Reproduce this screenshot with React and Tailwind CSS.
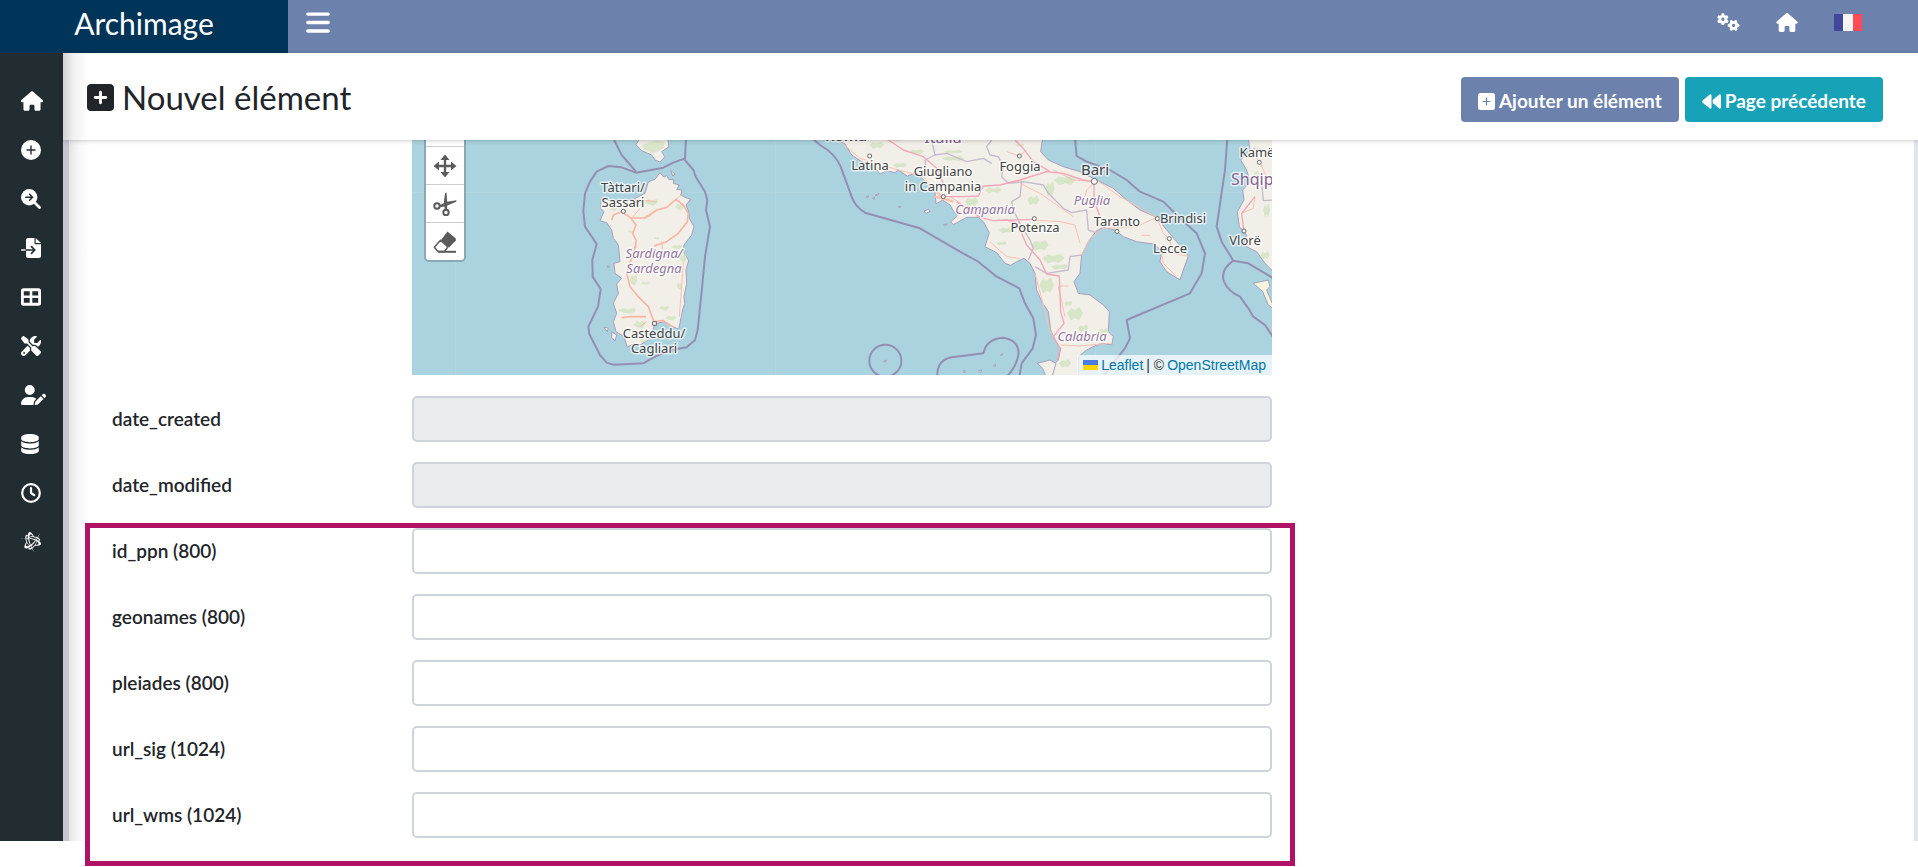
import React from 'react';
import {
  FaBackward,
  FaBars,
  FaBattleNet,
  FaDatabase,
  FaGears,
  FaHouse,
  FaScrewdriverWrench,
  FaSquarePlus,
  FaUserPen,
} from 'react-icons/fa6';

const CirclePlusIcon = ({ className }) => (
  <svg viewBox="0 0 20 20" className={className} aria-hidden="true">
    <circle cx="10" cy="10" r="10" fill="currentColor" />
    <path d="M10 6V14M6 10H14" stroke="#222d32" strokeWidth="1.400" strokeLinecap="round" />
  </svg>
);

const SearchArrowIcon = ({ className }) => (
  <svg viewBox="0 0 20 20" className={className} aria-hidden="true">
    <path d="M12 12L18.500 18.500" stroke="currentColor" strokeWidth="2.800" strokeLinecap="round" />
    <circle cx="8.200" cy="8.200" r="8.200" fill="currentColor" />
    <path d="M4.800 8.200H11.400M8.600 5.200L11.600 8.200L8.600 11.200" fill="none" stroke="#222d32" strokeWidth="1.500" strokeLinecap="round" strokeLinejoin="round" />
  </svg>
);

const FileImportIcon = ({ className }) => (
  <svg viewBox="0 0 20 20" className={className} aria-hidden="true">
    <path d="M7 0H13.500V5.200Q13.500 6.200 14.500 6.200H20V18Q20 20 18 20H7Q5 20 5 18V2Q5 0 7 0Z" fill="currentColor" />
    <path d="M14.700 0L20 5H14.700Z" fill="currentColor" />
    <path d="M0.800 12H5" stroke="currentColor" strokeWidth="1.600" strokeLinecap="round" />
    <path d="M5 12H13.500M10.500 8.700L13.800 12L10.500 15.300" fill="none" stroke="#222d32" strokeWidth="1.700" strokeLinecap="round" strokeLinejoin="round" />
  </svg>
);

const TableIcon = ({ className }) => (
  <svg viewBox="0 0 20 20" className={className} aria-hidden="true">
    <path
      fill="currentColor"
      fillRule="evenodd"
      d="M2.500 1.300H17.500Q20 1.300 20 3.800V16.200Q20 18.700 17.500 18.700H2.500Q0 18.700 0 16.200V3.800Q0 1.300 2.500 1.300ZM2.800 4.200V8.600H8.700V4.200ZM11.300 4.200V8.600H17.200V4.200ZM2.800 11.100V15.800H8.700V11.100ZM11.300 11.100V15.800H17.200V11.100Z"
    />
  </svg>
);

const ClockIcon = ({ className }) => (
  <svg viewBox="0 0 20 20" className={className} fill="none" stroke="currentColor" strokeWidth="2.200" aria-hidden="true">
    <circle cx="10" cy="10" r="8.800" />
    <path d="M10 5V10L13.200 12.200" strokeLinecap="round" strokeLinejoin="round" />
  </svg>
);

const AddIcon = ({ className }) => (
  <svg viewBox="0 0 17 17" className={className} aria-hidden="true">
    <rect width="17" height="17" rx="2.500" fill="currentColor" />
    <path d="M8.500 5V12M5 8.500H12" stroke="#6c82ad" strokeWidth="1.200" strokeLinecap="round" />
  </svg>
);

const MENU = [
  { label: 'Accueil', icon: FaHouse, size: 'w-[22px] h-5' },
  { label: 'Ajouter', icon: CirclePlusIcon, size: 'w-5 h-5' },
  { label: 'Rechercher', icon: SearchArrowIcon, size: 'w-5 h-5' },
  { label: 'Importer', icon: FileImportIcon, size: 'w-5 h-5' },
  { label: 'Tables', icon: TableIcon, size: 'w-5 h-5' },
  { label: 'Outils', icon: FaScrewdriverWrench, size: 'w-5 h-5' },
  { label: 'Utilisateurs', icon: FaUserPen, size: 'w-[25px] h-5' },
  { label: 'Base de données', icon: FaDatabase, size: 'w-[18px] h-5' },
  { label: 'Historique', icon: ClockIcon, size: 'w-5 h-5' },
  { label: 'Réseau', icon: FaBattleNet, size: 'w-5 h-5' },
];

const DATE_FIELDS = [
  { id: 'date_created', label: 'date_created' },
  { id: 'date_modified', label: 'date_modified' },
];

const LINK_FIELDS = [
  { id: 'id_ppn', label: 'id_ppn (800)', max: 800 },
  { id: 'geonames', label: 'geonames (800)', max: 800 },
  { id: 'pleiades', label: 'pleiades (800)', max: 800 },
  { id: 'url_sig', label: 'url_sig (1024)', max: 1024 },
  { id: 'url_wms', label: 'url_wms (1024)', max: 1024 },
];

const CITIES = [
  { name: 'Tàttari/', x: 211, y: 52 },
  { name: 'Sassari', x: 211, y: 67 },
  { name: 'Casteddu/', x: 242, y: 198 },
  { name: 'Cagliari', x: 242, y: 213 },
  { name: 'Latina', x: 458, y: 30 },
  { name: 'Giugliano', x: 531, y: 36 },
  { name: 'in Campania', x: 531, y: 51 },
  { name: 'Foggia', x: 608, y: 31 },
  { name: 'Potenza', x: 623, y: 92 },
  { name: 'Taranto', x: 705, y: 86 },
  { name: 'Brindisi', x: 771, y: 83 },
  { name: 'Lecce', x: 758, y: 113 },
  { name: 'Vlorë', x: 833, y: 105 },
  { name: 'Kamë', x: 845, y: 17 },
];

const REGIONS = [
  { name: 'Sardigna/', x: 242, y: 118 },
  { name: 'Sardegna', x: 242, y: 133 },
  { name: 'Campania', x: 573, y: 74 },
  { name: 'Puglia', x: 680, y: 65 },
  { name: 'Calabria', x: 670, y: 201 },
];

// Woodland patches, [cx, cy, rx, ry]
const SARDINIA_GREEN = [
  [752, 218, 22, 10], [700, 452, 12, 18], [680, 543, 28, 9], [718, 585, 18, 13],
  [792, 535, 15, 8], [812, 565, 16, 8], [735, 460, 12, 5], [848, 385, 12, 16],
  [830, 352, 16, 8], [745, 258, 10, 5], [640, 238, 12, 6], [690, 305, 8, 4],
  [838, 232, 12, 12], [770, 325, 8, 4], [838, 470, 8, 12], [730, 632, 12, 6],
];

const ITALY_GREEN = [
  [170, 45, 22, 10], [290, 65, 22, 7], [400, 85, 35, 7], [240, 105, 22, 7],
  [455, 215, 20, 14], [520, 180, 26, 8], [400, 65, 30, 5], [560, 300, 24, 9],
  [505, 240, 20, 8], [735, 150, 34, 14], [690, 175, 14, 22], [640, 210, 18, 14],
  [660, 345, 26, 16], [700, 385, 34, 14], [720, 410, 26, 8], [680, 465, 22, 24],
  [650, 285, 14, 8], [765, 550, 24, 20], [790, 595, 16, 12], [850, 605, 16, 12],
  [745, 520, 12, 8], [735, 700, 18, 12], [545, 340, 16, 6], [600, 45, 14, 5],
  [1085, 355, 8, 5], [1335, 375, 14, 12], [1310, 130, 8, 8], [1340, 240, 10, 20],
];

const MapDrawing = () => (
  <svg viewBox="0 0 860 235" preserveAspectRatio="xMinYMin slice" className="block h-full w-full" aria-hidden="true">
    <rect width="860" height="235" fill="#aad3df" />
    <g stroke="#b2d6e0" strokeWidth="1">
      <path d="M0 52.500H860M43.500 0V235M363.500 0V235M683.500 0V235" />
    </g>

    {/* Corsica and Sardinia */}
    <g transform="translate(-12 -10) scale(0.33333)" strokeLinejoin="round">
      <g fill="none" stroke="#948fb2" strokeWidth="6">
        <path d="M640 25L665 75L708 125M858 25L855 85L820 98L790 113L708 128L665 112L625 108L590 125L570 155L555 190L550 245L555 290L590 342L577 390L578 440L602 477L594 530L565 590L568 612L600 675L620 698L640 704L730 700L765 680L800 665L830 657L860 652L885 630L893 600L905 485L915 380L930 290L918 240L922 210L915 185L887 140L880 120L853 88" />
      </g>
      <g fill="#f2efe9" stroke="#a99fbb" strokeWidth="3">
        <path d="M708 44L725 62L755 75L765 90L780 96L795 80L785 65L807 50L803 25L720 25Z" />
        <path d="M780 128L792 142L800 136L806 148L822 150L820 160L838 165L830 178L846 180L842 195L862 205L872 208L858 225L866 245L868 265L882 290L875 315L852 345L850 365L866 392L858 420L860 460L852 500L854 520L848 540L836 598L820 590L790 575L765 582L755 610L745 630L720 645L700 642L682 652L672 620L648 605L640 575L650 550L640 520L655 490L650 462L665 445L645 430L642 400L660 395L655 345L640 325L635 300L620 278L600 272L612 245L602 235L604 205L640 215L700 208L735 190L745 155L765 148Z" />
        <path d="M635 605L650 615L645 633L635 622ZM612 592L625 594L622 605ZM812 122L826 132L818 138ZM622 408h5v4h-5Z" />
      </g>
      <g fill="#cfe3bd" opacity="0.7">
        {SARDINIA_GREEN.map(([cx, cy, rx, ry]) => (
          <path key={`${cx}-${cy}`} d={`M${cx - rx} ${cy}l${rx * 0.6} ${-ry}l${rx * 0.5} ${ry * 0.4}l${rx * 0.7} ${-ry * 0.5}l${rx * 0.2} ${ry}l${-rx * 0.6} ${ry}l${-rx * 0.7} ${-ry * 0.4}Z`} />
        ))}
        <path d="M725 45L765 32L795 35L790 55L760 70L735 60Z" />
      </g>
      <g fill="none" stroke="#f9b5a2" strokeWidth="5">
        <path d="M635 270L640 255L665 245L690 262L708 285L698 310L708 330L707 355M690 264H735L770 240L800 232L828 208L850 225L865 250L862 275L835 310L800 335L762 348M707 345L680 430L690 470L715 500L745 530L762 575M665 563L690 560H738M762 575L790 572L820 592" />
        <path strokeWidth="2.500" d="M828 208L850 190M770 215L700 208M700 260L720 235M785 335L790 380M850 400L845 470L838 560M740 575L720 590" />
      </g>
      <g fill="#fff" stroke="#666" strokeWidth="3">
        <circle cx="670" cy="244" r="6" />
        <rect x="758" y="575" width="11" height="11" />
      </g>
    </g>

    {/* Southern Italy and the Albanian coast */}
    <g transform="translate(408 -10) scale(0.33333)" strokeLinejoin="round">
      <g fill="#f2efe9" stroke="#a99fbb" strokeWidth="3">
        <path d="M45 25L75 42L95 75L125 95L165 112L180 132L200 122L225 128L235 120L262 138L290 128L325 165L345 185L348 222L368 210L390 225L400 242L412 258L392 275L400 284L440 262L475 262L490 275L508 308L495 350L530 368L555 400L572 406L590 395L612 385L630 400L645 430L650 480L665 515L685 545L692 600L710 640L722 655L715 690L700 705L682 735V760H775V680L800 660L830 645L850 640L875 645L880 620L865 605L868 545L850 525L810 495L775 490L762 455L780 430L785 375L805 335L830 302L850 292L885 300L910 320L950 335L1000 342L1025 362L1020 395L1040 425L1080 450L1090 420L1105 378L1070 335L1040 300L1010 262L960 240L920 210L880 175L830 150L780 125L730 110L685 90L662 65L668 25Z" />
        <path d="M652 700L690 690L708 700L695 745H680L668 715Z" />
        <path d="M1285 25L1290 60L1262 90L1280 120L1290 155L1268 180L1272 210L1252 245L1258 290L1280 315L1270 345L1310 365L1335 400L1365 430V25Z" />
        <path fill="#f3f3de" d="M1300 460L1345 450L1350 470L1340 480L1365 540L1345 525L1328 485Z" />
        <path d="M312 243L325 238L330 244L318 250ZM140 198h5v4h-5ZM157 205l6-5v8ZM165 196l12-6l-4 6ZM236 229h6v3h-6ZM370 285l12-3l-5 5ZM190 694l10-4l-3 6ZM430 722h5v5h-5ZM475 722l10-2l-4 8ZM520 708l6-6v7ZM541 675l8-4l-3 5Z" />
      </g>
      <g fill="#cfe3bd" opacity="0.75">
        {ITALY_GREEN.map(([cx, cy, rx, ry]) => (
          <path key={`${cx}-${cy}`} d={`M${cx - rx} ${cy}l${rx * 0.5} ${-ry * 0.8}l${rx * 0.5} ${ry * 0.3}l${rx * 0.6} ${-ry * 0.5}l${rx * 0.4} ${ry}l${-rx * 0.5} ${ry}l${-rx * 0.5} ${-ry * 0.3}l${-rx * 0.5} ${ry * 0.4}Z`} />
        ))}
      </g>
      <g fill="none" stroke="#c6bacd" strokeWidth="4">
        <path d="M335 30L345 75L380 70L440 95L490 85L515 100M515 30L500 50L510 75L535 80L550 110L545 140L565 160L610 155M605 155L600 200L575 215L580 240L600 280L630 330L640 355L625 390M610 155L670 165L685 190L730 235L755 248L800 240L805 300L835 310M645 410L680 430L745 420L750 380L785 375M345 75L315 90L320 135M1300 160L1325 155L1330 212L1360 210M1300 55L1330 60" />
      </g>
      <g fill="none" stroke="#f9c0b0" strokeWidth="3">
        <path d="M55 30L120 85L200 110L310 140L350 185M390 200L430 225L470 240M560 65L598 78L620 60M700 120L760 150L820 155M825 155L800 180L790 215M830 150L900 200L1010 262L1030 310L1048 326M785 375L810 325L850 295L950 290L1010 262M1048 326L1060 370L1100 378M1025 365L1030 400L1070 440M510 335L560 380L600 385M640 270L720 275L765 285L780 340M645 430L690 600L710 640M722 645L775 648L870 640M720 468H745M1290 60L1318 95L1340 140M1305 200L1300 235L1265 250M200 30H245M600 160L660 190L760 260M715 470L735 560M965 316H990" />
        <path strokeWidth="7" d="M345 200L380 208L400 215M348 185L372 205" />
      </g>
      <g fill="none" stroke="#f2a6b8" strokeWidth="4">
        <path d="M205 30L250 60L310 80L350 115L370 160M375 200L430 200L475 198L490 168L540 165L600 150L680 125L730 130L790 150L822 155M585 30L605 50L640 95L690 125M410 215L480 262L520 272L560 270L600 280M520 272L640 268M590 275L620 345L660 390L680 432L718 438L722 545L732 580L700 620L720 655L712 690M822 155V210L840 260M1272 305L1265 250L1285 225L1305 200" />
      </g>
      <g fill="none" stroke="#948fb2" strokeWidth="6">
        <path d="M-20 28L0 45Q45 70 62 110L95 200Q105 230 135 248L300 295L420 365L475 395L530 440L598 475L615 520L640 565L648 615L638 655L605 700L598 740" />
        <path d="M765 25L770 78L800 95L870 120L920 150L960 185L1030 215L1075 260L1130 310L1155 370L1145 430L1110 490L920 570L930 625L915 655L870 710L850 740" />
        <path d="M1222 25L1215 120L1190 290L1205 335L1240 392L1285 400L1360 445M1240 392Q1200 420 1212 455Q1225 485 1260 500L1285 535L1300 560L1335 585L1360 622" />
        <path d="M352 740Q350 690 395 682L450 675L490 670Q500 625 550 623Q595 630 596 670Q590 710 560 740" />
        <circle cx="196" cy="692" r="48" />
      </g>
      <g fill="#fff" stroke="#666" strokeWidth="3">
        <circle cx="149" cy="78" r="6" />
        <circle cx="370" cy="200" r="6" />
        <circle cx="598" cy="78" r="6" />
        <circle cx="643" cy="266" r="6" />
        <circle cx="891" cy="304" r="6" />
        <circle cx="1012" cy="266" r="6" />
        <circle cx="1048" cy="326" r="6" />
        <circle cx="1272" cy="303" r="6" />
        <circle cx="1318" cy="97" r="6" />
        <circle cx="823" cy="154" r="9" />
      </g>
    </g>

    <g textAnchor="middle" stroke="#fff" strokeOpacity="0.7" strokeWidth="3" strokeLinejoin="round" className="font-['Noto_Sans',sans-serif] text-[13px] [paint-order:stroke]">
      <g fill="#444">
        {CITIES.map((c) => (
          <text key={c.name} x={c.x} y={c.y}>{c.name}</text>
        ))}
        <text x="683" y="35" className="text-[15px]">Bari</text>
        <text x="434" y="1" className="text-[15px] font-semibold">Roma</text>
      </g>
      <g fill="#9475a2" className="italic">
        {REGIONS.map((r) => (
          <text key={r.name} x={r.x} y={r.y}>{r.name}</text>
        ))}
      </g>
      <g fill="#83608f">
        <text x="531" y="3" className="text-[16px]">Italia</text>
        <text x="819" y="45" textAnchor="start" className="text-[16px]">Shqip</text>
      </g>
    </g>
  </svg>
);

const MoveIcon = () => (
  <svg viewBox="0 0 24 24" className="h-6 w-6" fill="#5b5b5b">
    <path d="M12 0.500L16.500 6H13.200V10.800H18V7.500L23.500 12L18 16.500V13.200H13.200V18H16.500L12 23.500L7.500 18H10.800V13.200H6V16.500L0.500 12L6 7.500V10.800H10.800V6H7.500Z" />
  </svg>
);

const CutIcon = () => (
  <svg viewBox="0 0 24 24" className="h-6 w-6" fill="none" stroke="#5b5b5b">
    <circle cx="4" cy="14" r="2.700" strokeWidth="2" />
    <circle cx="13" cy="20.500" r="2.700" strokeWidth="2" />
    <path fill="#5b5b5b" stroke="none" d="M13.500 0.500L14.200 9.800L23.500 8.200L23.200 9.800L14.300 13.400L13.800 18.500H11.800L11.500 14.400L6.500 15.200L6.200 13.300L10.800 11.200L12 1.500Z" />
  </svg>
);

const EraserIcon = () => (
  <svg viewBox="0 0 24 24" className="h-6 w-6">
    <path fill="#5b5b5b" d="M14.500 1.500L22.800 8.500V10.500L16 17.500L7.800 10.200Z" />
    <path fill="#fff" stroke="#5b5b5b" strokeWidth="1.500" strokeLinejoin="round" d="M7.500 10.300L14.800 17L11.500 21.500H5L1.300 17.200Z" />
    <path fill="#5b5b5b" d="M5 20.800H23V22.800H5Z" />
  </svg>
);

const TOOLS = [
  { label: 'Déplacer', icon: MoveIcon },
  { label: 'Couper', icon: CutIcon },
  { label: 'Effacer', icon: EraserIcon },
];

const FieldRow = ({ id, label, max, disabled }) => (
  <div className="flex items-center">
    <label htmlFor={id} className="w-[300px] shrink-0 text-[19px] leading-6 font-semibold text-[#212529]">
      {label}
    </label>
    <input
      id={id}
      type="text"
      maxLength={max}
      disabled={disabled}
      className="h-[46px] min-w-0 flex-1 rounded-[5px] border-2 border-[#ced4da] bg-white px-4 text-[19px] outline-none disabled:bg-[#e9ecef]"
    />
  </div>
);

const Header = () => (
  <header className="flex h-[53px] bg-[#6c82ad] text-white">
    <a href="#accueil" className="flex w-[288px] justify-center bg-[#003458] pt-[3px] text-[30px] leading-10">
      Archimage
    </a>
    <button type="button" aria-label="Menu" className="ml-[18px] flex h-11 items-center">
      <FaBars className="h-[27px] w-6" />
    </button>
    <nav className="ml-auto flex h-11 items-center gap-9 pr-14">
      <a href="#parametres" aria-label="Paramètres"><FaGears className="h-[18px] w-[23px]" /></a>
      <a href="#accueil" aria-label="Accueil"><FaHouse className="h-[19px] w-[22px]" /></a>
      <a href="#langue" aria-label="Français" className="flex h-[17px] w-7">
        <span className="flex-1 bg-[#41479b]" />
        <span className="flex-1 bg-[#f5f5f5]" />
        <span className="flex-1 bg-[#ff4b55]" />
      </a>
    </nav>
  </header>
);

const Sidebar = () => (
  <nav className="w-[63px] shrink-0 bg-[#222d32] pt-[23px] text-white">
    {MENU.map(({ label, icon: Icon, size }) => (
      <a key={label} href="#menu" aria-label={label} className="flex h-[49px] items-center pl-[21px]">
        <Icon className={size} />
      </a>
    ))}
  </nav>
);

const TitleBar = () => (
  <div className="relative z-10 flex h-[87px] items-center justify-between bg-white bg-[linear-gradient(to_right,#d2d2d2,#f0f0f0_10px,#ffffff_26px)] pr-[35px] pl-6 shadow-[0_1px_4px_rgba(0,0,0,0.2)]">
    <h1 className="flex items-center gap-2 pt-px text-[33px] leading-10 text-[#212529]">
      <FaSquarePlus className="h-[31px] w-[27px]" />
      Nouvel élément
    </h1>
    <div className="flex gap-[6px] pt-[6px] text-[19px] font-bold text-white">
      <button type="button" className="flex h-[45px] items-center gap-1 rounded bg-[#6c82ad] px-[17px] pt-1">
        <AddIcon className="h-[17px] w-[17px]" />
        Ajouter un élément
      </button>
      <button type="button" className="flex h-[45px] items-center gap-1 rounded bg-[#17a2b8] px-[17px] pt-1">
        <FaBackward className="h-[19px] w-[19px]" />
        Page précédente
      </button>
    </div>
  </div>
);

const MapPanel = () => (
  <div className="relative ml-[300px] h-[235px] overflow-hidden bg-[#aad3df]">
    <MapDrawing />
    <div className="absolute top-0 left-3 w-[42px] rounded-b-[5px] border-2 border-t-0 border-black/20 bg-clip-padding">
      <div className="h-[6px] bg-white" />
      {TOOLS.map(({ label, icon: Icon }) => (
        <button
          key={label}
          type="button"
          aria-label={label}
          className="flex h-[38px] w-full items-center justify-center border-t border-[#ccc] bg-white last:rounded-b-[3px]"
        >
          <Icon />
        </button>
      ))}
    </div>
    <div className="absolute right-0 bottom-0 flex h-5 items-center gap-[3px] bg-white/70 px-[6px] font-['Liberation_Sans',sans-serif] text-[14px] leading-none text-[#333]">
      <span className="flex h-[10px] w-[15px] flex-col">
        <span className="flex-1 bg-[#4c7be1]" />
        <span className="flex-1 bg-[#ffd500]" />
      </span>
      <a href="#leaflet" className="text-[#0078a8]">Leaflet</a>
      <span>| ©</span>
      <a href="#osm" className="text-[#0078a8]">OpenStreetMap</a>
    </div>
  </div>
);

export default function App() {
  return (
    <div className="min-h-screen bg-white font-[Lato,sans-serif]">
      <Header />
      <div className="flex">
        <Sidebar />
        <main className="min-w-0 flex-1">
          <TitleBar />
          <div className="border-r-4 border-l-6 border-r-[#e4e5ea] border-l-[#c6c6cc]">
            <form className="bg-[linear-gradient(to_right,#e4e4e4,#f7f7f7_10px,#ffffff_20px)] pb-[3px] pl-[43px]">
              <div className="max-w-[1160px]">
                <MapPanel />
                <div className="mt-[21px] flex flex-col gap-5">
                  {DATE_FIELDS.map((f) => (
                    <FieldRow key={f.id} {...f} disabled />
                  ))}
                  <div className="relative flex flex-col gap-5">
                    {LINK_FIELDS.map((f) => (
                      <FieldRow key={f.id} {...f} />
                    ))}
                    {/* Frame around the external identifiers */}
                    <div className="pointer-events-none absolute -top-[5px] -right-[23px] -bottom-7 -left-[27px] border-[5px] border-[#b01366]" />
                  </div>
                </div>
              </div>
            </form>
          </div>
        </main>
      </div>
    </div>
  );
}
